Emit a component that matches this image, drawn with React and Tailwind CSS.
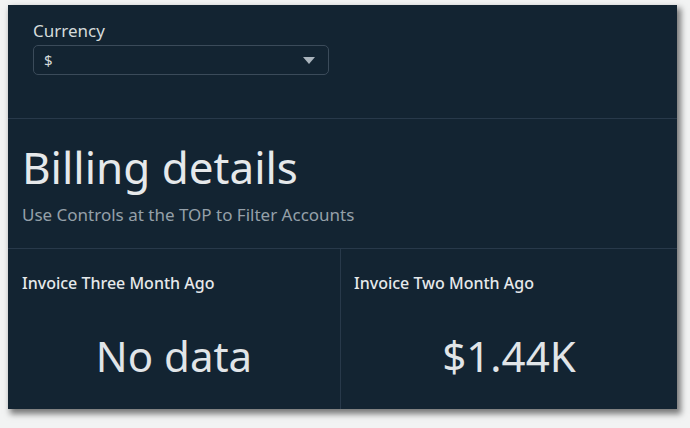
export default function App() {
  return (
    <div className="h-[428px] w-[690px] bg-[#f2f3f3] pt-[5px] pl-[8px]" style={{ fontFamily: '"Noto Sans", "Open Sans", sans-serif' }}>
      <div className="flex h-[404px] w-[669px] flex-col bg-[#132432] shadow-[3px_4px_6px_1px_rgba(0,0,0,0.5)]">
        {/* controls */}
        <div className="h-[114px] border-b border-[#28394a] pt-[15px] pl-[25px]">
          <div className="text-[17px] leading-[22px] text-[#d5dbdb]">Currency</div>
          <div className="mt-[3px] flex h-[30px] w-[296px] items-center justify-between rounded-[5px] border border-[#3b4b5a] pr-[13px] pl-[10px]">
            <span className="text-[15px] text-[#d5dbdb]">$</span>
            <svg width="12" height="7" viewBox="0 0 12 7">
              <path d="M0 0h12L6 7z" fill="#aab4bd" />
            </svg>
          </div>
        </div>

        {/* heading */}
        <div className="h-[130px] border-b border-[#28394a] pt-[21px] pl-[14px]">
          <h1 className="text-[44px] leading-[54px] text-[#e6e9eb]">Billing details</h1>
          <p className="mt-[10px] text-[17px] leading-[22px] text-[#95a0a9]">Use Controls at the TOP to Filter Accounts</p>
        </div>

        {/* kpis */}
        <div className="grid flex-1 grid-cols-[333px_1fr]">
          <div className="flex flex-col border-r border-[#28394a] pt-[24px] pl-[14px]">
            <div className="text-[16px] font-medium leading-[21px] text-[#e6e9eb]">Invoice Three Month Ago</div>
            <div className="mt-[37px] pr-[14px] text-center text-[42px] leading-[50px] text-[#e1e5e8]">No data</div>
          </div>
          <div className="flex flex-col pt-[24px] pl-[13px]">
            <div className="text-[16px] font-medium leading-[21px] text-[#e6e9eb]">Invoice Two Month Ago</div>
            <div className="mt-[37px] pr-[13px] text-center text-[42px] leading-[50px] text-[#e1e5e8]">$1.44K</div>
          </div>
        </div>
      </div>
    </div>
  );
}
